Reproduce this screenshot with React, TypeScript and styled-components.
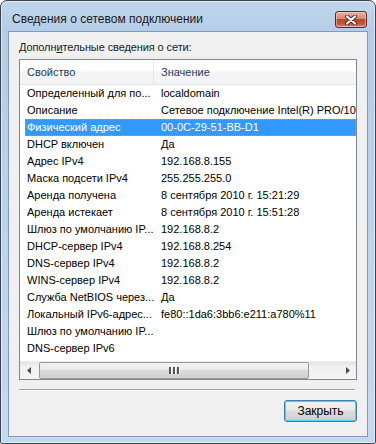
import React from 'react';
import styled, { createGlobalStyle } from 'styled-components';

const GlobalStyle = createGlobalStyle`
  html, body {
    margin: 0;
    padding: 0;
    background: #ffffff;
  }
  body {
    font-family: "Liberation Sans", Arial, sans-serif;
  }
`;

const Window = styled.div`
  box-sizing: border-box;
  width: 376px;
  height: 444px;
  border: 1px solid #3b4450;
  border-radius: 7px 7px 2px 2px;
  background: linear-gradient(180deg, #c1d6ec 0px, #b4cde8 30px, #c3d9ef 100%);
  box-shadow: inset 0 0 0 1px rgba(255, 255, 255, 0.55);
  display: flex;
  flex-direction: column;
  padding: 0 7px 6px 7px;
`;

const TitleBar = styled.div`
  height: 30px;
  display: flex;
  align-items: flex-start;
  justify-content: space-between;
`;

const TitleText = styled.div`
  padding: 11px 0 0 4px;
  font-size: 12px;
  color: #1a1a1a;
`;

const CloseButton = styled.div`
  box-sizing: border-box;
  margin-top: 10px;
  margin-right: 1px;
  width: 32px;
  height: 17px;
  border: 1px solid #5a2b25;
  border-radius: 3px;
  background: linear-gradient(180deg, #eab1a5 0%, #d98873 45%, #c1452a 50%, #c8553a 80%, #dc8d6d 100%);
  box-shadow: inset 0 0 0 1px rgba(255, 220, 210, 0.5);
  display: flex;
  align-items: center;
  justify-content: center;
`;

const Client = styled.div`
  flex: 1;
  box-sizing: border-box;
  border: 1px solid #7f9db9;
  background: #f0f0f0;
  padding: 8px 10px 0 10px;
  display: flex;
  flex-direction: column;
`;

const GroupLabel = styled.div`
  font-size: 11px;
  letter-spacing: -0.1px;
  color: #1a1a1a;
  height: 19px;
  line-height: 15px;
  span {
    text-decoration: underline;
  }
`;

const ListView = styled.div`
  box-sizing: border-box;
  height: 321px;
  border: 1px solid #828790;
  background: #ffffff;
  display: flex;
  flex-direction: column;
  overflow: hidden;
`;

const HeaderRow = styled.div`
  display: grid;
  grid-template-columns: 134px 1fr;
  height: 25px;
  box-sizing: border-box;
  border-bottom: 1px solid #e5e5e5;
  background: linear-gradient(180deg, #ffffff 0%, #ffffff 45%, #f4f5f7 50%, #f3f4f6 100%);
`;

const HeaderCell = styled.div<{ $divider?: boolean }>`
  font-size: 11px;
  color: #1e395b;
  padding-left: 7px;
  display: flex;
  align-items: center;
  border-right: ${p => (p.$divider ? '1px solid #e3e8ee' : 'none')};
`;

const Rows = styled.div`
  flex: 1;
`;

const Row = styled.div<{ $selected?: boolean }>`
  display: grid;
  grid-template-columns: 134px 1fr;
  height: 17px;
  position: relative;
  color: ${p => (p.$selected ? '#ffffff' : '#000000')};
  background: ${p => (p.$selected ? 'linear-gradient(90deg, transparent 5px, #3399ff 5px)' : 'transparent')};
  ${p =>
    p.$selected &&
    `&::after {
      content: '';
      position: absolute;
      left: 5px;
      right: 0;
      top: 0;
      bottom: 0;
      border: 1px dotted #cc9a55;
    }`}
`;

const Cell = styled.div`
  font-size: 11px;
  line-height: 17px;
  padding-left: 7px;
  white-space: nowrap;
  overflow: hidden;
`;

const ScrollBar = styled.div`
  height: 17px;
  display: flex;
  align-items: stretch;
  background: linear-gradient(180deg, #e6e6e6 0%, #f2f2f2 30%, #f4f4f4 100%);
  border-top: 1px solid #ececec;
`;

const ArrowBox = styled.div`
  width: 17px;
  display: flex;
  align-items: center;
  justify-content: center;
`;

const Track = styled.div`
  flex: 1;
  display: flex;
  align-items: stretch;
  padding: 0 30px 0 2px;
`;

const Thumb = styled.div`
  flex: 1;
  box-sizing: border-box;
  border: 1px solid #979797;
  border-radius: 2px;
  background: linear-gradient(180deg, #f3f3f3 0%, #ebebeb 45%, #dbdbdb 50%, #d0d0d0 100%);
  display: flex;
  align-items: center;
  justify-content: center;
  gap: 1px;
`;

const Grip = styled.div`
  width: 2px;
  height: 7px;
  background: #555;
  border-right: 1px solid #fff;
`;

const Separator = styled.div`
  margin: 9px 2px 0 0;
  border-top: 1px solid #a0a0a0;
  border-bottom: 1px solid #ffffff;
`;

const Footer = styled.div`
  display: flex;
  justify-content: flex-end;
  padding-top: 9px;
`;

const PushButton = styled.div`
  box-sizing: border-box;
  width: 73px;
  height: 22px;
  border: 1px solid #3c7fb1;
  border-radius: 3px;
  background: linear-gradient(180deg, #f2f2f2 0%, #ebebeb 45%, #dddddd 50%, #cfcfcf 100%);
  box-shadow: inset 0 0 0 1px #48d0fa;
  font-size: 12px;
  color: #000;
  display: flex;
  align-items: center;
  justify-content: center;
`;

type Item = { name: string; value: string };

const items: Item[] = [
  { name: 'Определенный для по...', value: 'localdomain' },
  { name: 'Описание', value: 'Сетевое подключение Intel(R) PRO/1000 MT' },
  { name: 'Физический адрес', value: '00-0C-29-51-BB-D1' },
  { name: 'DHCP включен', value: 'Да' },
  { name: 'Адрес IPv4', value: '192.168.8.155' },
  { name: 'Маска подсети IPv4', value: '255.255.255.0' },
  { name: 'Аренда получена', value: '8 сентября 2010 г. 15:21:29' },
  { name: 'Аренда истекает', value: '8 сентября 2010 г. 15:51:28' },
  { name: 'Шлюз по умолчанию IP...', value: '192.168.8.2' },
  { name: 'DHCP-сервер IPv4', value: '192.168.8.254' },
  { name: 'DNS-сервер IPv4', value: '192.168.8.2' },
  { name: 'WINS-сервер IPv4', value: '192.168.8.2' },
  { name: 'Служба NetBIOS через...', value: 'Да' },
  { name: 'Локальный IPv6-адрес...', value: 'fe80::1da6:3bb6:e211:a780%11' },
  { name: 'Шлюз по умолчанию IP...', value: '' },
  { name: 'DNS-сервер IPv6', value: '' },
];

const SELECTED = 2;

function CloseGlyph() {
  return (
    <svg width="14" height="10" viewBox="0 0 14 10">
      <path d="M3 1.5 L11 8.5 M11 1.5 L3 8.5" stroke="#4a2a26" strokeWidth="4" strokeLinecap="round" />
      <path d="M3 1.5 L11 8.5 M11 1.5 L3 8.5" stroke="#ffffff" strokeWidth="2.2" strokeLinecap="round" />
    </svg>
  );
}

function Arrow({ dir }: { dir: 'left' | 'right' }) {
  return (
    <svg width="4" height="7" viewBox="0 0 4 7">
      {dir === 'left' ? <path d="M4 0 L0 3.5 L4 7 Z" fill="#4d4d4d" /> : <path d="M0 0 L4 3.5 L0 7 Z" fill="#4d4d4d" />}
    </svg>
  );
}

export default function App() {
  return (
    <>
      <GlobalStyle />
      <Window>
        <TitleBar>
          <TitleText>Сведения о сетевом подключении</TitleText>
          <CloseButton>
            <CloseGlyph />
          </CloseButton>
        </TitleBar>
        <Client>
          <GroupLabel>
            Дополн<span>и</span>тельные сведения о сети:
          </GroupLabel>
          <ListView>
            <HeaderRow>
              <HeaderCell $divider>Свойство</HeaderCell>
              <HeaderCell>Значение</HeaderCell>
            </HeaderRow>
            <Rows>
              {items.map((it, i) => (
                <Row key={i} $selected={i === SELECTED}>
                  <Cell>{it.name}</Cell>
                  <Cell>{it.value}</Cell>
                </Row>
              ))}
            </Rows>
            <ScrollBar>
              <ArrowBox>
                <Arrow dir="left" />
              </ArrowBox>
              <Track>
                <Thumb>
                  <Grip />
                  <Grip />
                  <Grip />
                </Thumb>
              </Track>
              <ArrowBox>
                <Arrow dir="right" />
              </ArrowBox>
            </ScrollBar>
          </ListView>
          <Separator />
          <Footer>
            <PushButton>Закрыть</PushButton>
          </Footer>
        </Client>
      </Window>
    </>
  );
}
